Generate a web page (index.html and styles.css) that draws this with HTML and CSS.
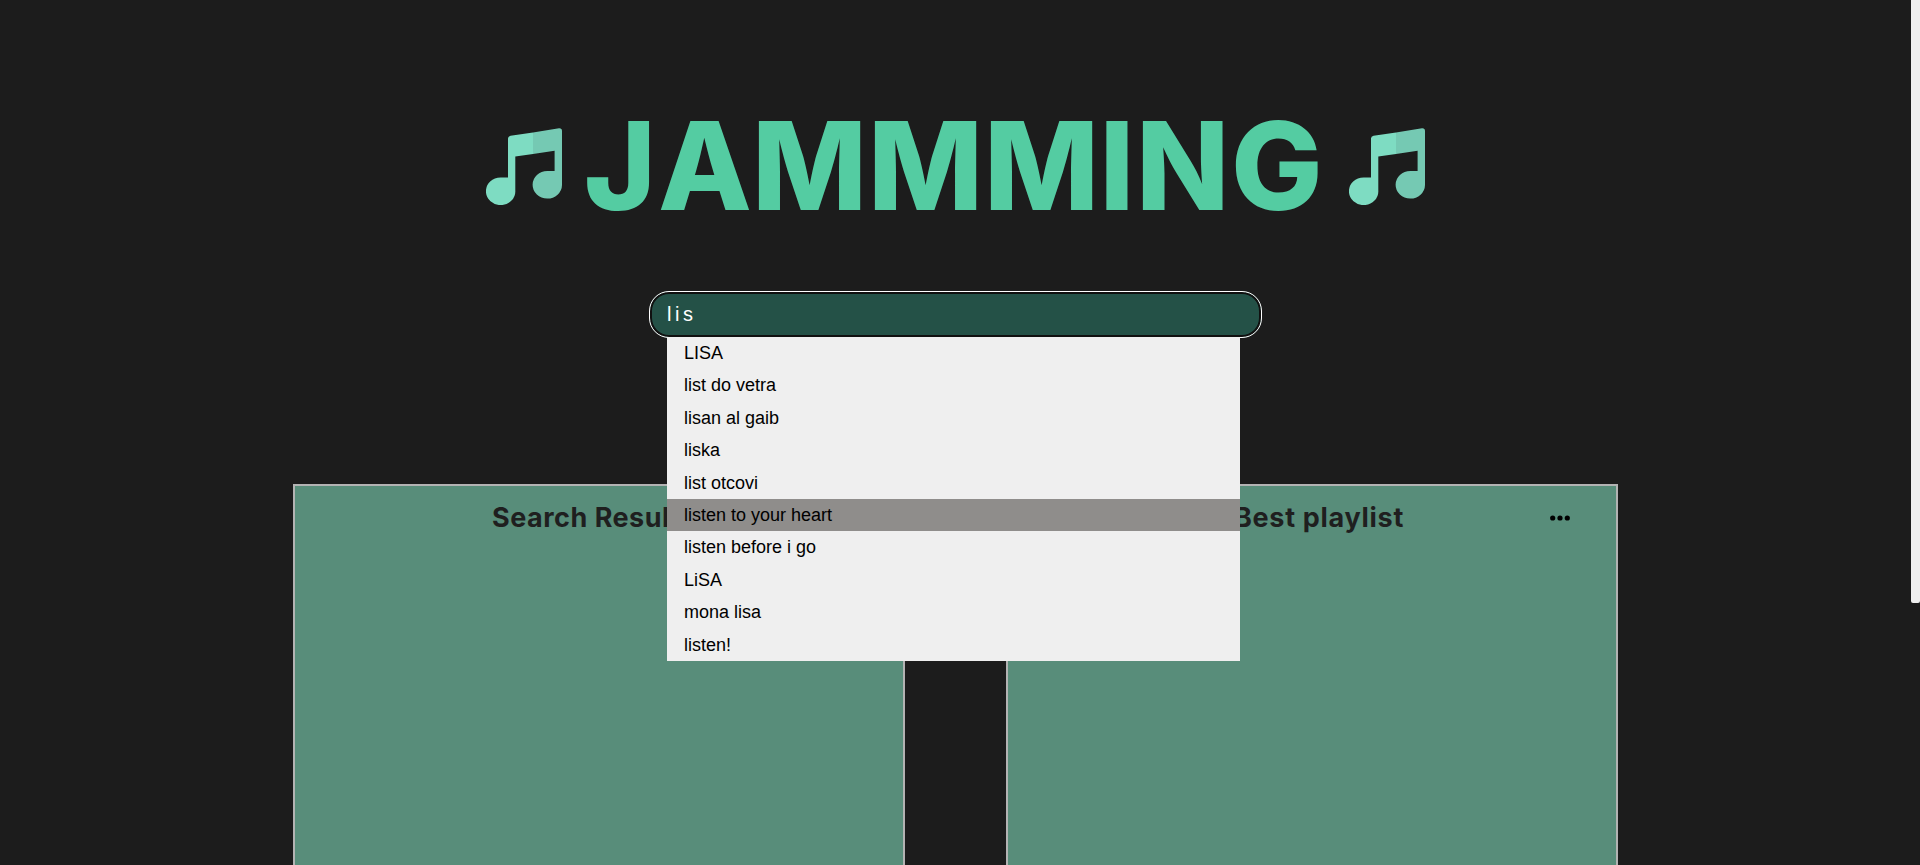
FILE: index.html
```html
<!DOCTYPE html>
<html lang="en">
<head>
<meta charset="utf-8">
<title>Jammming</title>
<link rel="stylesheet" href="styles.css">
</head>
<body>
<svg class="defs" aria-hidden="true">
  <symbol id="note" viewBox="0 0 76 77">
    <path fill="#7edcc2" d="M22 10.500Q22 8.200 24.500 7.800L47 4.500V25.900L29.300 28.600V62.500A14.700 13.800 0 1 1 14.700 49.500H22Z"/>
    <path fill="#75c9b3" d="M47 4.500L73 .2Q76 0 76 3V57A14.700 13.800 0 1 1 61.300 43H68.600V22.700L47 25.900Z"/>
  </symbol>
</svg>
<main class="page">
  <header class="hero">
    <svg class="note"><use href="#note"/></svg>
    <svg class="title" viewBox="0 0 744 120"><text y="107" x="1 75 169 285 401 516.500 553 648">JAMMMING</text></svg>
    <svg class="note"><use href="#note"/></svg>
  </header>
  <div class="search">
    <div class="field">lis</div>
    <ul class="menu">
      <li>LISA</li>
      <li>list do vetra</li>
      <li>lisan al gaib</li>
      <li>liska</li>
      <li>list otcovi</li>
      <li class="active">listen to your heart</li>
      <li>listen before i go</li>
      <li>LiSA</li>
      <li>mona lisa</li>
      <li>listen!</li>
    </ul>
  </div>
  <div class="panels">
    <section class="panel"><h2 class="results">Search Results</h2></section>
    <section class="panel"><h2 class="playlist">Best playlist</h2>
      <svg class="dots" viewBox="0 0 20 6"><circle cx="2.700" cy="3" r="2.600"/><circle cx="10" cy="3" r="2.600"/><circle cx="17.300" cy="3" r="2.600"/></svg>
    </section>
  </div>
</main>
<div class="thumb"></div>
</body>
</html>
```
FILE: styles.css
```css
* { box-sizing: border-box; }
body { margin: 0; height: 865px; overflow: hidden; background: #1c1c1c; font-family: "Liberation Sans", Arial, sans-serif; }
.defs { position: absolute; width: 0; height: 0; }
.page { width: 1911px; height: 865px; overflow: hidden; }
.hero { height: 291px; padding: 103px 0 0 486px; display: flex; align-items: flex-start; }
.note { width: 76px; height: 77px; margin-top: 25px; flex: none; }
.title { width: 744px; height: 120px; margin: 0 22px 0 21px; flex: none; overflow: visible; }
.title text { font: 800 122px Inter, sans-serif; fill: #54cca2; }
.search { position: relative; width: 613px; height: 193px; margin-left: 649px; }
.field { height: 47px; border: 1px solid #fff; border-radius: 20px; background: #245147; box-shadow: inset 0 0 0 2px #101010; padding: 0 17px; color: #fff; font-size: 20px; line-height: 45px; letter-spacing: 3.500px; }
.menu { position: absolute; z-index: 1; left: 18px; top: 46px; width: 573px; margin: 0; padding: 0; list-style: none; background: #efefef; }
.menu li { height: 32.400px; padding-left: 17px; line-height: 32px; font-size: 18px; color: #000; }
.menu .active { background: #8f8d8b; }
.panels { display: flex; gap: 101px; padding-left: 293px; }
.panel { position: relative; width: 612px; height: 500px; flex: none; border: 2px solid #b3b3b3; background: #588d7a; display: flex; }
.panel h2 { margin: 14px 0 0; font: 700 27px/36px Inter, sans-serif; color: #1f1f1f; white-space: nowrap; }
.panel .results { padding-left: 197px; letter-spacing: .5px; }
.panel .playlist { padding-left: 226px; letter-spacing: .7px; }
.dots { width: 20px; height: 6px; margin: 29px 46px 0 auto; }
.thumb { position: absolute; right: 0; top: 0; width: 9px; height: 603px; background: #efefef; border-radius: 0 0 2px 2px; }
```
